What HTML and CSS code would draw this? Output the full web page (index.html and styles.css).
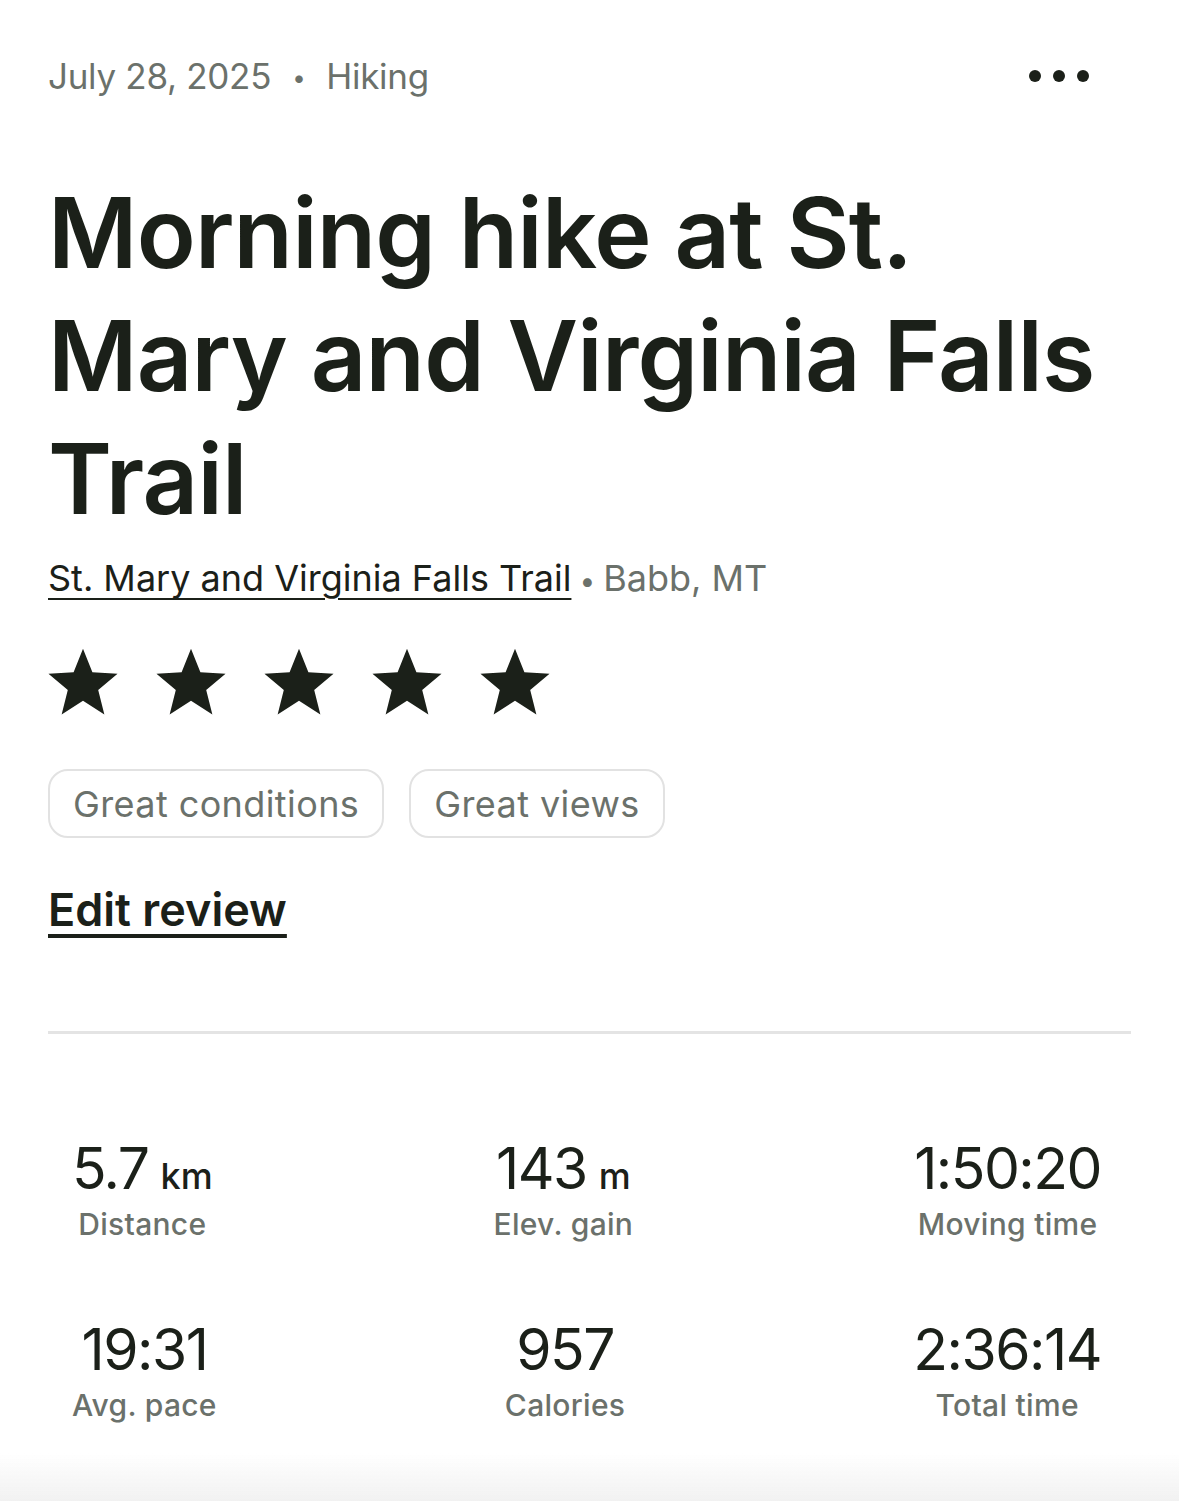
FILE: index.html
```html
<!DOCTYPE html>
<html lang="en">
<head>
<meta charset="utf-8">
<title>Morning hike</title>
<link rel="stylesheet" href="styles.css">
</head>
<body>
<main class="page">
  <header class="meta">
    <span class="meta-text">July 28, 2025<span class="meta-dot">•</span>Hiking</span>
    <button class="more" aria-label="More">
      <svg width="62" height="14" viewBox="0 0 62 14"><circle cx="7" cy="7" r="6" fill="#1b2019"/><circle cx="31" cy="7" r="6" fill="#1b2019"/><circle cx="55" cy="7" r="6" fill="#1b2019"/></svg>
    </button>
  </header>

  <h1 class="title">Morning hike at St. Mary and Virginia Falls Trail</h1>

  <p class="location"><a class="trail-link" href="#">St. Mary and Virginia Falls Trail</a><span class="loc-sep">•</span><span class="loc-place">Babb, MT</span></p>

  <div class="stars">
    <svg class="star" viewBox="0 0 24 24"><path d="M12 1.2l3.05 7.6 8.15.55-6.27 5.22 2 7.93L12 18.1l-6.93 4.4 2-7.93L.8 9.35l8.15-.55z"/></svg>
    <svg class="star" viewBox="0 0 24 24"><path d="M12 1.2l3.05 7.6 8.15.55-6.27 5.22 2 7.93L12 18.1l-6.93 4.4 2-7.93L.8 9.35l8.15-.55z"/></svg>
    <svg class="star" viewBox="0 0 24 24"><path d="M12 1.2l3.05 7.6 8.15.55-6.27 5.22 2 7.93L12 18.1l-6.93 4.4 2-7.93L.8 9.35l8.15-.55z"/></svg>
    <svg class="star" viewBox="0 0 24 24"><path d="M12 1.2l3.05 7.6 8.15.55-6.27 5.22 2 7.93L12 18.1l-6.93 4.4 2-7.93L.8 9.35l8.15-.55z"/></svg>
    <svg class="star" viewBox="0 0 24 24"><path d="M12 1.2l3.05 7.6 8.15.55-6.27 5.22 2 7.93L12 18.1l-6.93 4.4 2-7.93L.8 9.35l8.15-.55z"/></svg>
  </div>

  <div class="chips">
    <span class="chip">Great conditions</span>
    <span class="chip">Great views</span>
  </div>

  <a class="edit" href="#">Edit review</a>

  <hr class="divider">

  <section class="stats">
    <div class="stat-row">
      <div class="stat"><div class="value">5.7<span class="unit">km</span></div><div class="label">Distance</div></div>
      <div class="stat"><div class="value">143<span class="unit">m</span></div><div class="label">Elev. gain</div></div>
      <div class="stat"><div class="value">1:50:20</div><div class="label">Moving time</div></div>
    </div>
    <div class="stat-row">
      <div class="stat"><div class="value">19:31</div><div class="label">Avg. pace</div></div>
      <div class="stat"><div class="value">957</div><div class="label">Calories</div></div>
      <div class="stat"><div class="value">2:36:14</div><div class="label">Total time</div></div>
    </div>
  </section>
</main>
<div class="bottom-fade"></div>
</body>
</html>
```

FILE: styles.css
```css
* { box-sizing: border-box; }
html, body { margin: 0; padding: 0; background: #fff; }
body {
  font-family: Inter, "Noto Sans", "Liberation Sans", sans-serif;
  color: #1b2019;
  overflow: hidden;
  height: 1501px;
}
.page { padding: 0 48px; }

.meta {
  display: flex;
  align-items: center;
  justify-content: space-between;
  height: 152px;
}
.meta-text {
  font-size: 35px;
  color: #6b716b;
  letter-spacing: -0.3px;
}
.meta-dot { margin: 0 21px; font-size: 24px; position: relative; top: -3px; }
.more {
  border: 0;
  background: none;
  padding: 0;
  margin-right: 41px;
  display: flex;
}

.title {
  margin: 19px 0 0;
  font-size: 97px;
  line-height: 123px;
  font-weight: 600;
  letter-spacing: -0.8px;
  color: #1b2019;
}

.location {
  margin: 14px 0 0;
  font-size: 36px;
  line-height: 48px;
  letter-spacing: 0;
}
.trail-link {
  color: #1b2019;
  text-decoration: underline;
  text-decoration-thickness: 2px;
  text-underline-offset: 7px;
}
.loc-sep { color: #6b716b; margin: 0 8px; font-size: 28px; }
.loc-place { color: #6b716b; }

.stars {
  display: flex;
  gap: 34px;
  margin: 40px 0 0 -2px;
}
.star { width: 74px; height: 74px; fill: #1b2019; }

.chips {
  display: flex;
  gap: 25px;
  margin-top: 50px;
}
.chip {
  border: 2px solid #e2e2e2;
  border-radius: 20px;
  height: 69px;
  padding: 0 23px;
  display: flex;
  align-items: center;
  font-size: 36px;
  color: #6b716b;
  letter-spacing: 0.4px;
}

.edit {
  display: inline-block;
  margin-top: 44px;
  font-size: 45px;
  font-weight: 600;
  color: #1b2019;
  letter-spacing: 0;
  text-decoration: underline;
  text-decoration-thickness: 4px;
  text-underline-offset: 8px;
}

.divider {
  border: 0;
  height: 3px;
  background: #e4e4e4;
  margin: 94px 0 0;
}

.stats {
  padding: 106px 30px 0 24px;
  display: flex;
  flex-direction: column;
  gap: 77px;
}
.stat-row {
  display: flex;
  justify-content: space-between;
}
.stat { text-align: center; }
.value {
  font-size: 57px;
  line-height: 58px;
  font-weight: 400;
  letter-spacing: -1.5px;
  color: #1b2019;
}
.unit {
  font-size: 36px;
  line-height: 1;
  font-weight: 500;
  letter-spacing: 0;
  margin-left: 12px;
}
.label {
  margin-top: 6px;
  font-size: 30px;
  line-height: 40px;
  font-weight: 500;
  color: #6b716b;
  letter-spacing: 0.3px;
}

.bottom-fade {
  position: fixed;
  left: 0; right: 0; bottom: 0;
  height: 48px;
  background: linear-gradient(to bottom, rgba(240,240,240,0), rgba(238,238,238,0.8));
  pointer-events: none;
}
```
